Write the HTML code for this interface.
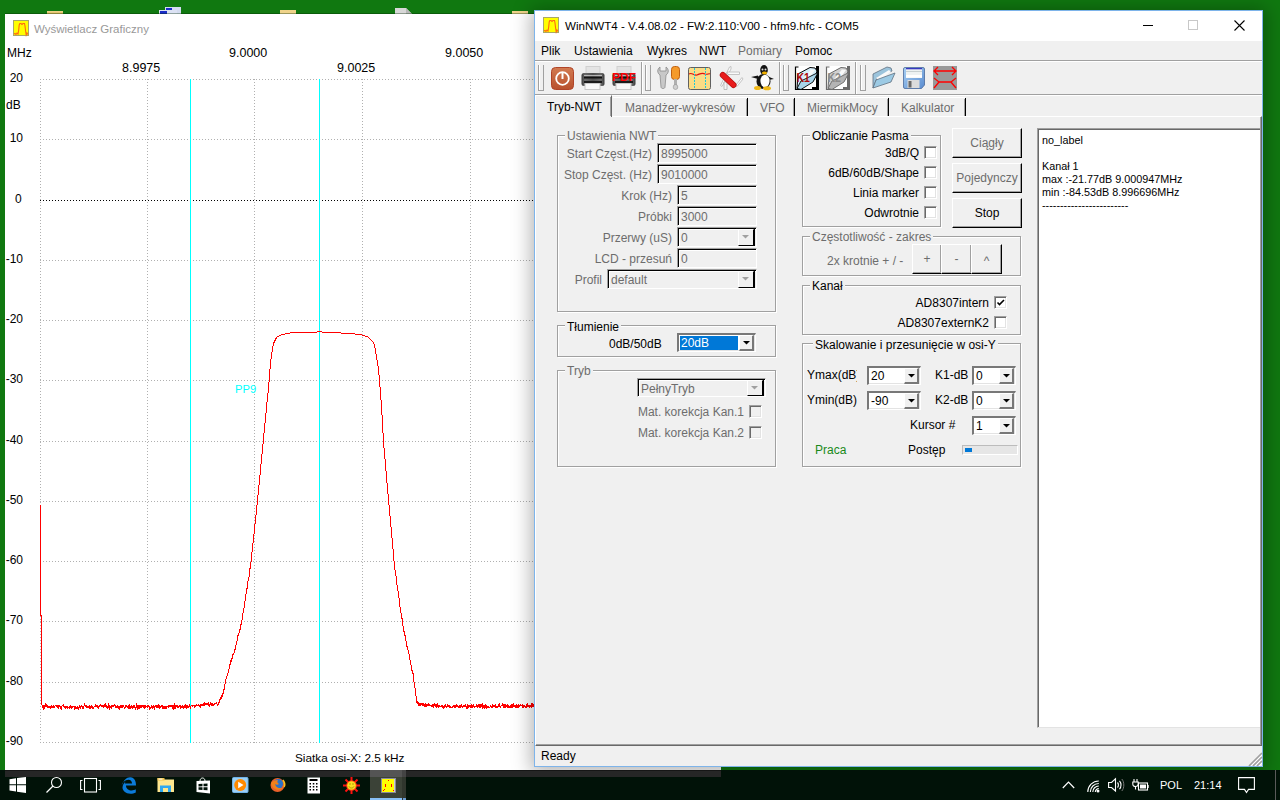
<!DOCTYPE html><html><head><meta charset="utf-8"><style>
*{box-sizing:border-box}
body{margin:0;width:1280px;height:800px;position:relative;overflow:hidden;background:#107810;font-family:"Liberation Sans",sans-serif;font-size:12px;color:#000}
.a{position:absolute}
.t{position:absolute;white-space:nowrap;line-height:14px}
svg{position:absolute;overflow:visible}
</style></head><body>
<div class="a" style="left:47px;top:11px;width:16px;height:3px;background:linear-gradient(#f0d890,#d8b050)"></div>
<div class="a" style="left:165px;top:7px;width:16px;height:7px;background:#d4dcf0;"></div>
<div class="a" style="left:166px;top:8px;width:6px;height:3px;background:#1a2cc8;"></div>
<div class="a" style="left:159px;top:10px;width:18px;height:4px;background:#dce2f4;"></div>
<div class="a" style="left:160px;top:11px;width:7px;height:3px;background:#1a2cc8;"></div>
<div class="a" style="left:280px;top:10px;width:16px;height:4px;background:#efd38a;"></div>
<svg style="left:395px;top:8px" width="20" height="6"><path d="M0,0 L11,0 L17,6 L0,6 Z" fill="#d8d8d8"/><path d="M11,0 L17,6 L11,6 Z" fill="#b8b8b8"/></svg>
<div class="a" style="left:512px;top:11px;width:16px;height:3px;background:#efd38a;"></div>
<div class="a" style="left:5px;top:13px;width:715px;height:1px;background:rgba(0,40,0,.35);"></div>
<div class="a" style="left:5px;top:14px;width:716px;height:763px;background:#fff;"></div>
<svg style="left:13px;top:20px" width="16" height="16"><rect x="0.5" y="0.5" width="15" height="15" fill="#ffff00" stroke="#a8a868"/>
<polyline points="1,14 2,13.5 3,14.5 4,13 5,14 5.7,10 6.2,5 6.8,3.5 8,3.5 9,4.5 10,3.5 11.5,3.5 12,6 12.6,11 13.2,15 14,13 15,14.5" fill="none" stroke="#ff6a10" stroke-width="1.1"/></svg>
<div class="t" style="left:34px;top:22px;font-size:11.5px;color:#999;">Wyświetlacz Graficzny</div>
<div class="t" style="left:7px;top:46px;">MHz</div>
<div class="t" style="left:6px;top:98px;">dB</div>
<div class="t" style="left:0;width:23px;text-align:right;top:71px">20</div>
<div class="t" style="left:0;width:23px;text-align:right;top:131px">10</div>
<div class="t" style="left:15px;top:192px;">0</div>
<div class="t" style="left:0;width:23px;text-align:right;top:252px">-10</div>
<div class="t" style="left:0;width:23px;text-align:right;top:312px">-20</div>
<div class="t" style="left:0;width:23px;text-align:right;top:372px">-30</div>
<div class="t" style="left:0;width:23px;text-align:right;top:433px">-40</div>
<div class="t" style="left:0;width:23px;text-align:right;top:493px">-50</div>
<div class="t" style="left:0;width:23px;text-align:right;top:553px">-60</div>
<div class="t" style="left:0;width:23px;text-align:right;top:613px">-70</div>
<div class="t" style="left:0;width:23px;text-align:right;top:674px">-80</div>
<div class="t" style="left:0;width:23px;text-align:right;top:734px">-90</div>
<div class="t" style="left:122px;top:61px;font-size:12.5px;">8.9975</div>
<div class="t" style="left:229px;top:46px;font-size:12.5px;">9.0000</div>
<div class="t" style="left:337px;top:61px;font-size:12.5px;">9.0025</div>
<div class="t" style="left:445px;top:46px;font-size:12.5px;">9.0050</div>
<div class="t" style="left:295px;top:751px;font-size:11.8px;">Siatka osi-X: 2.5 kHz</div>
<svg style="left:0;top:0" width="720" height="777" shape-rendering="crispEdges"><line x1="40" y1="79.5" x2="720" y2="79.5" stroke="#b0b0b0" stroke-dasharray="1 2"/><line x1="40" y1="139.5" x2="720" y2="139.5" stroke="#b0b0b0" stroke-dasharray="1 2"/><line x1="40" y1="200.5" x2="720" y2="200.5" stroke="#000" stroke-dasharray="1 2"/><line x1="40" y1="260.5" x2="720" y2="260.5" stroke="#b0b0b0" stroke-dasharray="1 2"/><line x1="40" y1="320.5" x2="720" y2="320.5" stroke="#b0b0b0" stroke-dasharray="1 2"/><line x1="40" y1="380.5" x2="720" y2="380.5" stroke="#b0b0b0" stroke-dasharray="1 2"/><line x1="40" y1="441.5" x2="720" y2="441.5" stroke="#b0b0b0" stroke-dasharray="1 2"/><line x1="40" y1="501.5" x2="720" y2="501.5" stroke="#b0b0b0" stroke-dasharray="1 2"/><line x1="40" y1="561.5" x2="720" y2="561.5" stroke="#b0b0b0" stroke-dasharray="1 2"/><line x1="40" y1="621.5" x2="720" y2="621.5" stroke="#b0b0b0" stroke-dasharray="1 2"/><line x1="40" y1="682.5" x2="720" y2="682.5" stroke="#b0b0b0" stroke-dasharray="1 2"/><line x1="40" y1="742.5" x2="720" y2="742.5" stroke="#b0b0b0" stroke-dasharray="1 2"/><line x1="40.5" y1="79" x2="40.5" y2="743" stroke="#b0b0b0" stroke-dasharray="1 2"/><line x1="147.5" y1="79" x2="147.5" y2="743" stroke="#b0b0b0" stroke-dasharray="1 2"/><line x1="254.5" y1="79" x2="254.5" y2="743" stroke="#b0b0b0" stroke-dasharray="1 2"/><line x1="362.5" y1="79" x2="362.5" y2="743" stroke="#b0b0b0" stroke-dasharray="1 2"/><line x1="470.5" y1="79" x2="470.5" y2="743" stroke="#b0b0b0" stroke-dasharray="1 2"/><line x1="577.5" y1="79" x2="577.5" y2="743" stroke="#b0b0b0" stroke-dasharray="1 2"/><line x1="685.5" y1="79" x2="685.5" y2="743" stroke="#b0b0b0" stroke-dasharray="1 2"/><line x1="190.5" y1="79" x2="190.5" y2="743" stroke="#00ffff"/><line x1="319.5" y1="79" x2="319.5" y2="743" stroke="#00ffff"/><polyline fill="none" stroke="#ff0000" stroke-width="1" points="40.5,505 40.5,615 41.5,615 41.5,704 42.5,705.5 42.5,705.5 42.5,706.5 43.5,709.5 43.5,705.5 43.5,705.5 44.5,705.5 44.5,708.5 44.5,706.5 45.5,706.5 45.5,703.5 45.5,703.5 46.5,705.5 46.5,706.5 46.5,705.5 47.5,707.5 47.5,706.5 47.5,705.5 48.5,707.5 48.5,706.5 48.5,706.5 49.5,707.5 49.5,705.5 49.5,706.5 50.5,707.5 50.5,708.5 50.5,706.5 51.5,705.5 51.5,705.5 51.5,707.5 52.5,707.5 52.5,707.5 52.5,706.5 53.5,707.5 53.5,706.5 53.5,705.5 54.5,707.5 54.5,707.5 54.5,706.5 55.5,705.5 55.5,705.5 55.5,705.5 56.5,705.5 56.5,706.5 56.5,705.5 57.5,706.5 57.5,707.5 57.5,705.5 58.5,706.5 58.5,708.5 58.5,705.5 59.5,705.5 59.5,706.5 59.5,705.5 60.5,706.5 60.5,708.5 60.5,706.5 61.5,707.5 61.5,709.5 61.5,706.5 62.5,705.5 62.5,705.5 62.5,705.5 63.5,706.5 63.5,703.5 63.5,706.5 64.5,707.5 64.5,705.5 64.5,707.5 65.5,707.5 65.5,705.5 65.5,708.5 66.5,706.5 66.5,707.5 66.5,706.5 67.5,706.5 67.5,708.5 67.5,707.5 68.5,707.5 68.5,707.5 68.5,707.5 69.5,708.5 69.5,705.5 69.5,706.5 70.5,707.5 70.5,707.5 70.5,705.5 71.5,707.5 71.5,706.5 71.5,708.5 72.5,706.5 72.5,707.5 72.5,707.5 73.5,706.5 73.5,705.5 73.5,706.5 74.5,706.5 74.5,707.5 74.5,709.5 75.5,707.5 75.5,705.5 75.5,707.5 76.5,707.5 76.5,707.5 76.5,708.5 77.5,706.5 77.5,705.5 77.5,708.5 78.5,709.5 78.5,707.5 78.5,707.5 79.5,707.5 79.5,706.5 79.5,705.5 80.5,707.5 80.5,708.5 80.5,707.5 81.5,705.5 81.5,706.5 81.5,706.5 82.5,706.5 82.5,708.5 82.5,706.5 83.5,707.5 83.5,708.5 83.5,706.5 84.5,705.5 84.5,705.5 84.5,703.5 85.5,706.5 85.5,706.5 85.5,706.5 86.5,707.5 86.5,706.5 86.5,705.5 87.5,706.5 87.5,707.5 87.5,706.5 88.5,706.5 88.5,707.5 88.5,706.5 89.5,708.5 89.5,707.5 89.5,705.5 90.5,708.5 90.5,705.5 90.5,706.5 91.5,705.5 91.5,707.5 91.5,707.5 92.5,707.5 92.5,705.5 92.5,708.5 93.5,708.5 93.5,706.5 93.5,707.5 94.5,706.5 94.5,706.5 94.5,706.5 95.5,705.5 95.5,706.5 95.5,704.5 96.5,706.5 96.5,705.5 96.5,705.5 97.5,705.5 97.5,707.5 97.5,707.5 98.5,707.5 98.5,708.5 98.5,706.5 99.5,706.5 99.5,705.5 99.5,705.5 100.5,705.5 100.5,703.5 100.5,705.5 101.5,705.5 101.5,706.5 101.5,706.5 102.5,705.5 102.5,706.5 102.5,705.5 103.5,705.5 103.5,706.5 103.5,707.5 104.5,706.5 104.5,706.5 104.5,704.5 105.5,703.5 105.5,706.5 105.5,706.5 106.5,705.5 106.5,706.5 106.5,707.5 107.5,706.5 107.5,708.5 107.5,707.5 108.5,707.5 108.5,706.5 108.5,703.5 109.5,709.5 109.5,705.5 109.5,705.5 110.5,707.5 110.5,706.5 110.5,706.5 111.5,705.5 111.5,705.5 111.5,708.5 112.5,705.5 112.5,706.5 112.5,705.5 113.5,706.5 113.5,705.5 113.5,705.5 114.5,705.5 114.5,705.5 114.5,704.5 115.5,705.5 115.5,707.5 115.5,707.5 116.5,707.5 116.5,707.5 116.5,706.5 117.5,705.5 117.5,707.5 117.5,706.5 118.5,706.5 118.5,707.5 118.5,707.5 119.5,709.5 119.5,707.5 119.5,707.5 120.5,705.5 120.5,706.5 120.5,707.5 121.5,707.5 121.5,707.5 121.5,705.5 122.5,707.5 122.5,706.5 122.5,705.5 123.5,705.5 123.5,705.5 123.5,705.5 124.5,708.5 124.5,706.5 124.5,707.5 125.5,707.5 125.5,705.5 125.5,705.5 126.5,706.5 126.5,705.5 126.5,705.5 127.5,707.5 127.5,706.5 127.5,706.5 128.5,705.5 128.5,705.5 128.5,708.5 129.5,704.5 129.5,706.5 129.5,708.5 130.5,708.5 130.5,705.5 130.5,707.5 131.5,706.5 131.5,707.5 131.5,705.5 132.5,706.5 132.5,706.5 132.5,708.5 133.5,706.5 133.5,706.5 133.5,705.5 134.5,706.5 134.5,706.5 134.5,705.5 135.5,709.5 135.5,706.5 135.5,708.5 136.5,706.5 136.5,705.5 136.5,703.5 137.5,709.5 137.5,708.5 137.5,705.5 138.5,705.5 138.5,708.5 138.5,707.5 139.5,708.5 139.5,706.5 139.5,705.5 140.5,706.5 140.5,707.5 140.5,705.5 141.5,705.5 141.5,706.5 141.5,707.5 142.5,705.5 142.5,706.5 142.5,706.5 143.5,705.5 143.5,707.5 143.5,705.5 144.5,708.5 144.5,705.5 144.5,705.5 145.5,705.5 145.5,705.5 145.5,707.5 146.5,706.5 146.5,706.5 146.5,706.5 147.5,705.5 147.5,705.5 147.5,707.5 148.5,705.5 148.5,705.5 148.5,706.5 149.5,707.5 149.5,705.5 149.5,709.5 150.5,707.5 150.5,706.5 150.5,708.5 151.5,706.5 151.5,706.5 151.5,705.5 152.5,708.5 152.5,707.5 152.5,707.5 153.5,705.5 153.5,705.5 153.5,706.5 154.5,709.5 154.5,705.5 154.5,707.5 155.5,705.5 155.5,706.5 155.5,706.5 156.5,707.5 156.5,704.5 156.5,705.5 157.5,707.5 157.5,706.5 157.5,705.5 158.5,707.5 158.5,703.5 158.5,707.5 159.5,705.5 159.5,708.5 159.5,705.5 160.5,706.5 160.5,705.5 160.5,707.5 161.5,705.5 161.5,706.5 161.5,705.5 162.5,707.5 162.5,708.5 162.5,705.5 163.5,706.5 163.5,708.5 163.5,706.5 164.5,708.5 164.5,705.5 164.5,706.5 165.5,707.5 165.5,708.5 165.5,706.5 166.5,708.5 166.5,705.5 166.5,706.5 167.5,706.5 167.5,705.5 167.5,706.5 168.5,705.5 168.5,705.5 168.5,707.5 169.5,706.5 169.5,704.5 169.5,706.5 170.5,706.5 170.5,706.5 170.5,705.5 171.5,706.5 171.5,706.5 171.5,705.5 172.5,705.5 172.5,706.5 172.5,708.5 173.5,709.5 173.5,706.5 173.5,705.5 174.5,708.5 174.5,708.5 174.5,703.5 175.5,707.5 175.5,707.5 175.5,708.5 176.5,705.5 176.5,705.5 176.5,706.5 177.5,705.5 177.5,707.5 177.5,707.5 178.5,706.5 178.5,705.5 178.5,707.5 179.5,706.5 179.5,706.5 179.5,705.5 180.5,705.5 180.5,708.5 180.5,705.5 181.5,706.5 181.5,705.5 181.5,707.5 182.5,707.5 182.5,705.5 182.5,705.5 183.5,706.5 183.5,705.5 183.5,708.5 184.5,705.5 184.5,705.5 184.5,707.5 185.5,706.5 185.5,703.5 185.5,707.5 186.5,708.5 186.5,704.5 186.5,705.5 187.5,707.5 187.5,705.5 187.5,705.5 188.5,707.5 188.5,705.5 188.5,707.5 189.5,705.5 189.5,705.5 189.5,705.5 190.5,708.5 190.5,707.5 190.5,706.5 191.5,705.5 191.5,704.5 191.5,705.5 192.5,706.5 192.5,706.5 192.5,705.5 193.5,705.5 193.5,705.5 193.5,705.5 194.5,705.5 194.5,707.5 194.5,705.5 195.5,706.5 195.5,704.5 195.5,705.5 196.5,705.5 196.5,705.5 196.5,704.5 197.5,705.5 197.5,704.5 197.5,705.5 198.5,704.5 198.5,705.5 198.5,704.5 199.5,706.5 199.5,704.5 199.5,706.5 200.5,704.5 200.5,707.5 200.5,706.5 201.5,705.5 201.5,705.5 201.5,704.5 202.5,705.5 202.5,703.5 202.5,704.5 203.5,703.5 203.5,705.5 203.5,703.5 204.5,705.5 204.5,701.5 204.5,704.5 205.5,704.5 205.5,703.5 205.5,703.5 206.5,703.5 206.5,702.5 206.5,704.5 207.5,704.5 207.5,703.5 207.5,704.5 208.5,702.5 208.5,702.5 208.5,704.5 209.5,706.5 209.5,705.5 209.5,704.5 210.5,704.5 210.5,704.5 210.5,702.5 211.5,704.5 211.5,702.5 211.5,705.5 212.5,705.5 212.5,704.5 212.5,703.5 213.5,704.5 213.5,703.5 213.5,705.5 214.5,703.5 214.5,704.5 214.5,704.5 215.5,703.5 215.5,703.5 215.5,703.5 216.5,703.5 216.5,703.5 216.5,702.5 217.5,705.5 217.5,704.5 217.5,705.5 218.5,704.5 218.5,704.5 218.5,703.5 219.5,701.5 219.5,700.5 219.5,701.5 220.5,697.5 220.5,698.5 220.5,699.5 221.5,698.5 221.5,696.5 221.5,697.5 222.5,693.5 222.5,696.5 222.5,695.5 223.5,692.5 223.5,691.5 223.5,691.5 224.5,687.5 224.5,685.5 224.5,685.5 225.5,682.5 225.5,682.5 225.5,682.5 226.5,676.5 226.5,678.5 226.5,678.5 227.5,673.5 227.5,673.5 227.5,675.5 228.5,670.5 228.5,671.5 228.5,671.5 229.5,666.5 229.5,666.5 229.5,665.5 230.5,663.5 230.5,664.5 230.5,662.5 231.5,658.5 231.5,661.5 231.5,660.5 232.5,656.5 232.5,655.5 232.5,655.5 233.5,653.5 233.5,652.5 233.5,654.5 234.5,651.5 234.5,648.5 234.5,651.5 235.5,647.5 235.5,646.5 235.5,646.5 236.5,643.5 236.5,643.5 236.5,643.5 237.5,638.5 237.5,637.5 237.5,637.5 238.5,633.5 238.5,633.5 238.5,633.5 239.5,632.5 239.5,629.5 239.5,631.5 240.5,627.5 240.5,625.5 240.5,626.5 241.5,622.5 241.5,623.5 241.5,623.5 242.5,616.5 242.5,617.5 242.5,617.5 243.5,609.5 243.5,611.5 243.5,612.5 244.5,604.5 244.5,604.5 244.5,604.5 245.5,597.5 245.5,597.5 245.5,599.5 246.5,589.5 246.5,591.5 246.5,590.5 247.5,586.5 247.5,584.5 247.5,585.5 248.5,577.5 248.5,579.5 248.5,580.5 249.5,573.5 249.5,571.5 249.5,570.5 250.5,566.5 250.5,566.5 250.5,566.5 251.5,557.5 252.5,547.5 253.5,538.5 254.5,529.5 255.5,519.5 256.5,510.5 257.5,500.5 258.5,490.5 259.5,480.5 260.5,469.5 261.5,459.5 262.5,449.5 263.5,438.5 264.5,428.5 265.5,418.5 266.5,407.5 267.5,397.5 268.5,389.5 269.5,374.5 270.5,363.5 271.5,355.5 272.5,349.5 273.5,343.5 274.5,341.5 275.5,339.5 276.5,337.5 277.5,336.5 278.5,336.5 279.5,335.5 280.5,335.5 281.5,334.5 282.5,334.5 283.5,334.5 284.5,334.5 285.5,333.5 286.5,333.5 287.5,333.5 288.5,333.5 289.5,333.5 290.5,332.5 291.5,332.5 292.5,332.5 293.5,332.5 294.5,332.5 295.5,332.5 296.5,332.5 297.5,332.5 298.5,332.5 299.5,332.5 300.5,332.5 301.5,332.5 302.5,332.5 303.5,332.5 304.5,332.5 305.5,332.5 306.5,332.5 307.5,332.5 308.5,332.5 309.5,332.5 310.5,332.5 311.5,332.5 312.5,332.5 313.5,332.5 314.5,332.5 315.5,332.5 316.5,332.5 317.5,331.5 318.5,331.5 319.5,331.5 320.5,331.5 321.5,331.5 322.5,332.5 323.5,332.5 324.5,332.5 325.5,332.5 326.5,332.5 327.5,332.5 328.5,332.5 329.5,332.5 330.5,332.5 331.5,332.5 332.5,332.5 333.5,332.5 334.5,332.5 335.5,332.5 336.5,332.5 337.5,332.5 338.5,332.5 339.5,332.5 340.5,332.5 341.5,333.5 342.5,333.5 343.5,333.5 344.5,333.5 345.5,333.5 346.5,333.5 347.5,333.5 348.5,333.5 349.5,333.5 350.5,333.5 351.5,333.5 352.5,333.5 353.5,333.5 354.5,333.5 355.5,334.5 356.5,334.5 357.5,334.5 358.5,334.5 359.5,334.5 360.5,334.5 361.5,334.5 362.5,335.5 363.5,335.5 364.5,335.5 365.5,336.5 366.5,336.5 367.5,336.5 368.5,337.5 369.5,338.5 370.5,339.5 371.5,340.5 372.5,341.5 373.5,342.5 374.5,345.5 375.5,350.5 376.5,356.5 377.5,362.5 378.5,369.5 379.5,380.5 380.5,393.5 381.5,405.5 382.5,423.5 383.5,441.5 384.5,453.5 385.5,464.5 386.5,476.5 387.5,488.5 388.5,499.5 389.5,510.5 390.5,521.5 391.5,532.5 392.5,543.5 393.5,554.5 394.5,567.5 394.5,567.5 394.5,564.5 395.5,574.5 395.5,574.5 395.5,571.5 396.5,579.5 396.5,578.5 396.5,581.5 397.5,588.5 397.5,585.5 397.5,585.5 398.5,595.5 398.5,593.5 398.5,593.5 399.5,601.5 399.5,600.5 399.5,602.5 400.5,610.5 400.5,610.5 400.5,609.5 401.5,615.5 401.5,615.5 401.5,615.5 402.5,621.5 402.5,621.5 402.5,624.5 403.5,627.5 403.5,630.5 403.5,629.5 404.5,633.5 404.5,634.5 404.5,633.5 405.5,637.5 405.5,636.5 405.5,637.5 406.5,643.5 406.5,642.5 406.5,645.5 407.5,648.5 407.5,646.5 407.5,646.5 408.5,653.5 408.5,651.5 408.5,651.5 409.5,656.5 409.5,659.5 409.5,658.5 410.5,661.5 410.5,664.5 410.5,662.5 411.5,667.5 411.5,668.5 411.5,668.5 412.5,672.5 412.5,671.5 412.5,671.5 413.5,675.5 413.5,675.5 413.5,678.5 414.5,685.5 414.5,684.5 414.5,682.5 415.5,693.5 415.5,692.5 415.5,692.5 416.5,699.5 416.5,702.5 416.5,701.5 417.5,701.5 417.5,701.5 417.5,701.5 418.5,705.5 418.5,701.5 418.5,705.5 419.5,704.5 419.5,705.5 419.5,703.5 420.5,703.5 420.5,703.5 420.5,705.5 421.5,704.5 421.5,704.5 421.5,703.5 422.5,703.5 422.5,703.5 422.5,705.5 423.5,705.5 423.5,704.5 423.5,703.5 424.5,706.5 424.5,703.5 424.5,705.5 425.5,706.5 425.5,703.5 425.5,703.5 426.5,706.5 426.5,704.5 426.5,704.5 427.5,704.5 427.5,704.5 427.5,705.5 428.5,703.5 428.5,705.5 428.5,703.5 429.5,705.5 429.5,705.5 429.5,704.5 430.5,705.5 430.5,704.5 430.5,705.5 431.5,705.5 431.5,706.5 431.5,705.5 432.5,706.5 432.5,705.5 432.5,704.5 433.5,704.5 433.5,707.5 433.5,706.5 434.5,704.5 434.5,704.5 434.5,704.5 435.5,706.5 435.5,706.5 435.5,704.5 436.5,705.5 436.5,707.5 436.5,704.5 437.5,706.5 437.5,702.5 437.5,705.5 438.5,706.5 438.5,704.5 438.5,707.5 439.5,706.5 439.5,706.5 439.5,705.5 440.5,706.5 440.5,705.5 440.5,706.5 441.5,705.5 441.5,705.5 441.5,705.5 442.5,707.5 442.5,706.5 442.5,705.5 443.5,707.5 443.5,708.5 443.5,706.5 444.5,705.5 444.5,707.5 444.5,705.5 445.5,704.5 445.5,705.5 445.5,706.5 446.5,707.5 446.5,706.5 446.5,706.5 447.5,706.5 447.5,705.5 447.5,704.5 448.5,706.5 448.5,706.5 448.5,705.5 449.5,707.5 449.5,707.5 449.5,705.5 450.5,707.5 450.5,707.5 450.5,706.5 451.5,707.5 451.5,706.5 451.5,707.5 452.5,707.5 452.5,706.5 452.5,706.5 453.5,705.5 453.5,706.5 453.5,706.5 454.5,707.5 454.5,705.5 454.5,705.5 455.5,706.5 455.5,707.5 455.5,705.5 456.5,704.5 456.5,705.5 456.5,706.5 457.5,706.5 457.5,705.5 457.5,705.5 458.5,706.5 458.5,705.5 458.5,707.5 459.5,705.5 459.5,706.5 459.5,707.5 460.5,707.5 460.5,706.5 460.5,706.5 461.5,704.5 461.5,706.5 461.5,704.5 462.5,707.5 462.5,706.5 462.5,707.5 463.5,705.5 463.5,706.5 463.5,705.5 464.5,706.5 464.5,705.5 464.5,705.5 465.5,706.5 465.5,705.5 465.5,704.5 466.5,708.5 466.5,705.5 466.5,706.5 467.5,707.5 467.5,708.5 467.5,704.5 468.5,706.5 468.5,706.5 468.5,707.5 469.5,705.5 469.5,704.5 469.5,705.5 470.5,705.5 470.5,707.5 470.5,705.5 471.5,704.5 471.5,706.5 471.5,707.5 472.5,707.5 472.5,706.5 472.5,706.5 473.5,704.5 473.5,703.5 473.5,706.5 474.5,707.5 474.5,706.5 474.5,706.5 475.5,706.5 475.5,706.5 475.5,706.5 476.5,705.5 476.5,703.5 476.5,706.5 477.5,707.5 477.5,706.5 477.5,705.5 478.5,705.5 478.5,706.5 478.5,704.5 479.5,704.5 479.5,707.5 479.5,707.5 480.5,704.5 480.5,706.5 480.5,707.5 481.5,705.5 481.5,706.5 481.5,704.5 482.5,703.5 482.5,708.5 482.5,707.5 483.5,707.5 483.5,704.5 483.5,705.5 484.5,705.5 484.5,708.5 484.5,707.5 485.5,704.5 485.5,706.5 485.5,707.5 486.5,707.5 486.5,704.5 486.5,708.5 487.5,706.5 487.5,705.5 487.5,707.5 488.5,706.5 488.5,707.5 488.5,706.5 489.5,707.5 489.5,707.5 489.5,707.5 490.5,706.5 490.5,705.5 490.5,705.5 491.5,706.5 491.5,707.5 491.5,707.5 492.5,704.5 492.5,707.5 492.5,707.5 493.5,705.5 493.5,706.5 493.5,705.5 494.5,705.5 494.5,705.5 494.5,706.5 495.5,705.5 495.5,707.5 495.5,704.5 496.5,707.5 496.5,706.5 496.5,706.5 497.5,706.5 497.5,707.5 497.5,707.5 498.5,704.5 498.5,706.5 498.5,706.5 499.5,703.5 499.5,704.5 499.5,706.5 500.5,706.5 500.5,707.5 500.5,706.5 501.5,705.5 501.5,705.5 501.5,705.5 502.5,705.5 502.5,704.5 502.5,703.5 503.5,704.5 503.5,707.5 503.5,706.5 504.5,706.5 504.5,703.5 504.5,707.5 505.5,706.5 505.5,707.5 505.5,704.5 506.5,706.5 506.5,704.5 506.5,705.5 507.5,705.5 507.5,703.5 507.5,707.5 508.5,707.5 508.5,704.5 508.5,705.5 509.5,707.5 509.5,706.5 509.5,707.5 510.5,705.5 510.5,705.5 510.5,707.5 511.5,704.5 511.5,705.5 511.5,707.5 512.5,704.5 512.5,706.5 512.5,707.5 513.5,703.5 513.5,704.5 513.5,706.5 514.5,705.5 514.5,706.5 514.5,705.5 515.5,705.5 515.5,707.5 515.5,707.5 516.5,707.5 516.5,705.5 516.5,704.5 517.5,705.5 517.5,706.5 517.5,707.5 518.5,704.5 518.5,707.5 518.5,705.5 519.5,705.5 519.5,706.5 519.5,705.5 520.5,705.5 520.5,705.5 520.5,704.5 521.5,705.5 521.5,705.5 521.5,705.5 522.5,704.5 522.5,706.5 522.5,707.5 523.5,707.5 523.5,706.5 523.5,705.5 524.5,705.5 524.5,705.5 524.5,705.5 525.5,707.5 525.5,706.5 525.5,706.5 526.5,705.5 526.5,707.5 526.5,705.5 527.5,703.5 527.5,706.5 527.5,705.5 528.5,706.5 528.5,704.5 528.5,706.5 529.5,705.5 529.5,706.5 529.5,707.5 530.5,705.5 530.5,706.5 530.5,706.5 531.5,703.5 531.5,707.5 531.5,706.5 532.5,703.5 532.5,706.5 532.5,706.5 533.5,704.5 533.5,706.5 533.5,705.5 534.5,707.5 534.5,705.5 534.5,707.5"/></svg>
<div class="t" style="left:235px;top:382px;font-size:11.2px;color:#00ffff;">PP9</div>
<div class="a" style="left:534px;top:10px;width:729px;height:757px;box-shadow:0 2px 18px 3px rgba(0,0,0,.30)"></div>
<div class="a" style="left:534px;top:10px;width:729px;height:757px;background:#f0f0f0;border:1px solid #7eb4ea"></div>
<div class="a" style="left:535px;top:11px;width:727px;height:30px;background:#fff;"></div>
<svg style="left:543px;top:17px" width="16" height="16"><rect x="0.5" y="0.5" width="15" height="15" fill="#ffff00" stroke="#a8a868"/>
<polyline points="1,14 2,13.5 3,14.5 4,13 5,14 5.7,10 6.2,5 6.8,3.5 8,3.5 9,4.5 10,3.5 11.5,3.5 12,6 12.6,11 13.2,15 14,13 15,14.5" fill="none" stroke="#ff6a10" stroke-width="1.1"/></svg>
<div class="t" style="left:565px;top:19px;font-size:11.6px">WinNWT4 - V.4.08.02 - FW:2.110:V00 - hfm9.hfc - COM5</div>
<div class="a" style="left:1143px;top:25px;width:10px;height:1px;background:#000;"></div>
<div class="a" style="left:1188px;top:20px;width:10px;height:10px;background:transparent;border:1px solid #c8c8c8"></div>
<svg style="left:1233px;top:19px" width="13" height="13"><path d="M1.5,1.5 L11.5,11.5 M11.5,1.5 L1.5,11.5" stroke="#000" stroke-width="1.1" fill="none"/></svg>
<div class="a" style="left:535px;top:41px;width:727px;height:19px;background:#f0f0f0;"></div>
<div class="a" style="left:535px;top:60px;width:727px;height:1px;background:#a0a0a0;"></div>
<div class="a" style="left:535px;top:61px;width:727px;height:1px;background:#fff;"></div>
<div class="t" style="left:541px;top:44px;color:#000;">Plik</div>
<div class="t" style="left:574px;top:44px;color:#000;">Ustawienia</div>
<div class="t" style="left:647px;top:44px;color:#000;">Wykres</div>
<div class="t" style="left:699px;top:44px;color:#000;">NWT</div>
<div class="t" style="left:738px;top:44px;color:#6d6d6d;">Pomiary</div>
<div class="t" style="left:795px;top:44px;color:#000;">Pomoc</div>
<div class="a" style="left:535px;top:94px;width:727px;height:1px;background:#a0a0a0;"></div>
<div class="a" style="left:535px;top:95px;width:727px;height:1px;background:#fff;"></div>
<div class="a" style="left:641px;top:62px;width:1px;height:32px;background:#a0a0a0;"></div>
<div class="a" style="left:642px;top:62px;width:1px;height:32px;background:#fff;"></div>
<div class="a" style="left:779px;top:62px;width:1px;height:32px;background:#a0a0a0;"></div>
<div class="a" style="left:780px;top:62px;width:1px;height:32px;background:#fff;"></div>
<div class="a" style="left:855px;top:62px;width:1px;height:32px;background:#a0a0a0;"></div>
<div class="a" style="left:856px;top:62px;width:1px;height:32px;background:#fff;"></div>
<div class="a" style="left:538px;top:65px;width:1px;height:26px;background:#a0a0a0;"></div>
<div class="a" style="left:539px;top:65px;width:1px;height:26px;background:#fff;"></div>
<div class="a" style="left:543px;top:65px;width:1px;height:26px;background:#a0a0a0;"></div>
<div class="a" style="left:538px;top:90px;width:6px;height:1px;background:#a0a0a0;"></div>
<div class="a" style="left:645px;top:65px;width:1px;height:26px;background:#a0a0a0;"></div>
<div class="a" style="left:646px;top:65px;width:1px;height:26px;background:#fff;"></div>
<div class="a" style="left:650px;top:65px;width:1px;height:26px;background:#a0a0a0;"></div>
<div class="a" style="left:645px;top:90px;width:6px;height:1px;background:#a0a0a0;"></div>
<div class="a" style="left:783px;top:65px;width:1px;height:26px;background:#a0a0a0;"></div>
<div class="a" style="left:784px;top:65px;width:1px;height:26px;background:#fff;"></div>
<div class="a" style="left:788px;top:65px;width:1px;height:26px;background:#a0a0a0;"></div>
<div class="a" style="left:783px;top:90px;width:6px;height:1px;background:#a0a0a0;"></div>
<div class="a" style="left:860px;top:65px;width:1px;height:26px;background:#a0a0a0;"></div>
<div class="a" style="left:861px;top:65px;width:1px;height:26px;background:#fff;"></div>
<div class="a" style="left:865px;top:65px;width:1px;height:26px;background:#a0a0a0;"></div>
<div class="a" style="left:860px;top:90px;width:6px;height:1px;background:#a0a0a0;"></div>
<svg style="left:551px;top:67px" width="23" height="23"><defs><linearGradient id="pw" x1="0" y1="0" x2="0" y2="1"><stop offset="0" stop-color="#d27a50"/><stop offset="1" stop-color="#b8502e"/></linearGradient></defs>
<rect x="0.5" y="0.5" width="22" height="22" rx="4" fill="url(#pw)" stroke="#b04428"/>
<circle cx="11.5" cy="11.5" r="6.3" fill="none" stroke="#fff" stroke-width="1.8"/><line x1="11.5" y1="6" x2="11.5" y2="12" stroke="#fff" stroke-width="2"/></svg>
<svg style="left:581px;top:66px" width="25" height="24"><defs><linearGradient id="pb581" x1="0" y1="0" x2="1" y2="0"><stop offset="0" stop-color="#3a3a3a"/><stop offset="0.15" stop-color="#6a6a6a"/><stop offset="0.5" stop-color="#505050"/><stop offset="0.85" stop-color="#6a6a6a"/><stop offset="1" stop-color="#3a3a3a"/></linearGradient></defs>
<rect x="5" y="0.5" width="14" height="8" fill="#e4e4e4" stroke="#d0d0d0"/>
<rect x="0.5" y="7" width="23" height="13" rx="2.5" fill="url(#pb581)"/>
<rect x="3" y="9" width="18" height="1.5" fill="#f0f0f0" opacity=".6"/><rect x="3" y="10.5" width="18" height="2" fill="#111"/><rect x="3" y="15" width="18" height="2" fill="#1a1a1a"/>
<rect x="4" y="17.5" width="15" height="6" fill="#f8f8f8" stroke="#c8c8c8"/></svg>
<svg style="left:612px;top:66px" width="25" height="24"><defs><linearGradient id="pb612" x1="0" y1="0" x2="1" y2="0"><stop offset="0" stop-color="#3a3a3a"/><stop offset="0.15" stop-color="#6a6a6a"/><stop offset="0.5" stop-color="#505050"/><stop offset="0.85" stop-color="#6a6a6a"/><stop offset="1" stop-color="#3a3a3a"/></linearGradient></defs>
<rect x="5" y="0.5" width="14" height="8" fill="#e4e4e4" stroke="#d0d0d0"/>
<rect x="0.5" y="7" width="23" height="13" rx="2.5" fill="url(#pb612)"/>
<rect x="3" y="9" width="18" height="1.5" fill="#f0f0f0" opacity=".6"/><rect x="3" y="10.5" width="18" height="2" fill="#111"/><rect x="3" y="15" width="18" height="2" fill="#1a1a1a"/>
<rect x="4" y="17.5" width="15" height="6" fill="#f8f8f8" stroke="#c8c8c8"/><text x="0" y="15" font-family="Liberation Sans" font-size="11.5" font-weight="bold" fill="#ff0000" textLength="24" lengthAdjust="spacingAndGlyphs">PDF</text></svg>
<svg style="left:657px;top:66px" width="24" height="24">
<path d="M3,1 C0,3 0,7 3,9 L4,21 C4,23 8,23 8,21 L9,9 C12,7 12,3 9,1 L9,5 L3,5 Z" fill="#c8c8c8" stroke="#8a8a8a" stroke-width="0.8"/>
<rect x="14.5" y="0.5" width="8" height="13" rx="3" fill="#f59a2a" stroke="#c06010"/>
<rect x="17" y="13" width="3" height="6" fill="#b0b0b0"/><ellipse cx="18.5" cy="21" rx="2.3" ry="2.5" fill="#d0d0d0" stroke="#909090" stroke-width="0.6"/></svg>
<svg style="left:688px;top:67px" width="23" height="23">
<rect x="0.5" y="0.5" width="22" height="22" rx="2" fill="#fbdc84" stroke="#606060"/>
<path d="M1,7 C4,5 6,9 9,8 C12,7 14,5 17,7 C19,8 21,6 22,7" fill="none" stroke="#e01010" stroke-width="1.2"/>
<line x1="6.5" y1="1" x2="6.5" y2="22" stroke="#20c8d8" stroke-dasharray="2 1"/><line x1="17.5" y1="1" x2="17.5" y2="22" stroke="#20c8d8" stroke-dasharray="2 1"/></svg>
<svg style="left:716px;top:62px" width="30" height="30">
<path d="M4.5,23.5 L13.5,5 L15,4.5 L15,7 L6,24.5 Z" fill="#fafafa" stroke="#b8b8b8" stroke-width="0.8"/>
<path d="M11,10 L23.5,10 L23.5,12.5 L12,12.5 Z" fill="#fafafa" stroke="#b8b8b8" stroke-width="0.8"/>
<path d="M19.5,23.5 L26,15.5 L27,17 L21,24.5 Z" fill="#fafafa" stroke="#b8b8b8" stroke-width="0.8"/>
<path d="M8,20 L8,27.5 L11,27.5 L11,20 Z" fill="#f4f4f4" stroke="#b0b0b0" stroke-width="0.8"/>
<line x1="6.8" y1="13" x2="17.5" y2="23" stroke="#b01010" stroke-width="6" stroke-linecap="round"/>
<line x1="6.8" y1="13" x2="17.5" y2="23" stroke="#e81c1c" stroke-width="4.6" stroke-linecap="round"/></svg>
<svg style="left:750px;top:62px" width="26" height="30">
<path d="M1,15 L8,13.5 L8,17 Z M24,17 L18,14.5 L18,18 Z" fill="#111"/>
<ellipse cx="13.5" cy="19.5" rx="7" ry="7.5" fill="#111"/>
<ellipse cx="14" cy="8" rx="3.8" ry="5" fill="#111"/>
<ellipse cx="15" cy="19" rx="4.6" ry="6.2" fill="#fff"/>
<circle cx="12.5" cy="7.5" r="1" fill="#ddd"/><circle cx="15.5" cy="7.5" r="1" fill="#ddd"/>
<ellipse cx="14.5" cy="11" rx="2.6" ry="1.4" fill="#f0b000"/>
<ellipse cx="7.5" cy="26" rx="3.5" ry="2" fill="#f0b818"/><ellipse cx="17" cy="26.2" rx="4" ry="2" fill="#f0b818"/></svg>
<svg style="left:795px;top:66px" width="25" height="25">
<rect x="0" y="0" width="24" height="24" fill="#fff"/>
<path d="M0.5,24 L0.5,1 L3.5,1" fill="none" stroke="#000" stroke-width="1.2"/>
<path d="M0.5,23.5 L18,23.5" stroke="#000" stroke-width="1"/>
<path d="M21,0 L24,0 L24,24 L17,24 L17,21 L21,21 Z" fill="#000"/>
<path d="M2,22.5 L3,8 L15,1.5 L20,2 L22,5 L19,14 L6,23 Z" fill="#d4ecf8" stroke="#000" stroke-width="1"/>
<path d="M5,17 L16,3.5 L20,4 L10,18 Z" fill="#f8f8f8"/>
<path d="M2,22.5 L6,15 L23,6.5 L18,16 L6,23.5 Z" fill="#a8d4ea" stroke="#000" stroke-width="0.9"/>
<text x="1.5" y="16" font-family="Liberation Sans" font-size="12.5" font-weight="bold" fill="#b00c0c" textLength="13.5" lengthAdjust="spacingAndGlyphs">K1</text></svg>
<svg style="left:826px;top:66px" width="25" height="25">
<rect x="0" y="0" width="24" height="24" fill="#fff"/>
<path d="M0.5,24 L0.5,1 L3.5,1" fill="none" stroke="#6a6a6a" stroke-width="1.2"/>
<path d="M0.5,23.5 L18,23.5" stroke="#6a6a6a" stroke-width="1"/>
<path d="M21,0 L24,0 L24,24 L17,24 L17,21 L21,21 Z" fill="#6a6a6a"/>
<path d="M2,22.5 L3,8 L15,1.5 L20,2 L22,5 L19,14 L6,23 Z" fill="#d0d0d0" stroke="#6a6a6a" stroke-width="1"/>
<path d="M5,17 L16,3.5 L20,4 L10,18 Z" fill="#f8f8f8"/>
<path d="M2,22.5 L6,15 L23,6.5 L18,16 L6,23.5 Z" fill="#b4b4b4" stroke="#6a6a6a" stroke-width="0.9"/>
<text x="1.5" y="16" font-family="Liberation Sans" font-size="12.5" font-weight="bold" fill="#8c8c8c" textLength="13.5" lengthAdjust="spacingAndGlyphs">K2</text></svg>
<svg style="left:872px;top:66px" width="24" height="24">
<path d="M1,22 L1,8 L15,1 L19,2 L20,5 L5,12 Z" fill="#9cc4dc" stroke="#607080" stroke-width="0.8"/>
<path d="M4,12 L17,4 L19,6 L6,14 Z" fill="#fafafa"/>
<path d="M1,22 L4,14 L23,7 L19,16 Z" fill="#9ccae4" stroke="#607080" stroke-width="0.8"/></svg>
<svg style="left:903px;top:67px" width="22" height="22"><defs><linearGradient id="fl" x1="0" y1="0" x2="1" y2="1"><stop offset="0" stop-color="#a8d0f4"/><stop offset="1" stop-color="#5a8cd0"/></linearGradient></defs>
<path d="M0.5,2 Q0.5,0.5 2,0.5 L20,0.5 Q21.5,0.5 21.5,2 L21.5,18 L18.5,21.5 L2,21.5 Q0.5,21.5 0.5,20 Z" fill="url(#fl)" stroke="#4a6a9a" stroke-width="0.8"/>
<rect x="3" y="1" width="16" height="10" fill="#eef2f2"/><rect x="3" y="1" width="16" height="1.3" fill="#3838c0"/><rect x="3" y="4" width="16" height="1" fill="#c8d0d0"/><rect x="3" y="8" width="16" height="2.5" fill="#fff"/>
<rect x="4.5" y="13" width="12" height="8" fill="#dcdcdc"/><rect x="5.5" y="14" width="3" height="6.5" fill="#6a6a6a"/></svg>
<svg style="left:933px;top:66px" width="24" height="24"><rect width="24" height="24" fill="#999"/>
<path d="M1,5 L23,5 M5,1 L1,5 L5,9 M19,1 L23,5 L19,9 M1,12 L6,16 L1,22 M23,12 L18,16 L23,22 M6,16 L18,16" stroke="#ff0000" stroke-width="1.3" fill="none"/></svg>
<div class="a" style="left:535px;top:116px;width:727px;height:630px;background:#f0f0f0;border-top:1px solid #fff;border-left:1px solid #fff;border-right:1px solid #696969;border-bottom:1px solid #696969;box-shadow:inset -1px -1px 0 #a0a0a0"></div>
<div class="a" style="left:747px;top:98px;width:1px;height:18px;background:#000;"></div>
<div class="a" style="left:746px;top:99px;width:1px;height:17px;background:#a0a0a0;"></div>
<div class="a" style="left:613px;top:97px;width:134px;height:1px;background:#fff;"></div>
<div class="t" style="left:625px;top:101px;color:#6d6d6d;">Manadżer-wykresów</div>
<div class="a" style="left:794px;top:98px;width:1px;height:18px;background:#000;"></div>
<div class="a" style="left:793px;top:99px;width:1px;height:17px;background:#a0a0a0;"></div>
<div class="a" style="left:748px;top:97px;width:46px;height:1px;background:#fff;"></div>
<div class="t" style="left:760px;top:101px;color:#6d6d6d;">VFO</div>
<div class="a" style="left:888px;top:98px;width:1px;height:18px;background:#000;"></div>
<div class="a" style="left:887px;top:99px;width:1px;height:17px;background:#a0a0a0;"></div>
<div class="a" style="left:795px;top:97px;width:93px;height:1px;background:#fff;"></div>
<div class="t" style="left:807px;top:101px;color:#6d6d6d;">MiermikMocy</div>
<div class="a" style="left:965px;top:98px;width:1px;height:18px;background:#000;"></div>
<div class="a" style="left:964px;top:99px;width:1px;height:17px;background:#a0a0a0;"></div>
<div class="a" style="left:889px;top:97px;width:76px;height:1px;background:#fff;"></div>
<div class="t" style="left:901px;top:101px;color:#6d6d6d;">Kalkulator</div>
<div class="a" style="left:535px;top:95px;width:77px;height:22px;background:#f0f0f0;border-top:1px solid #fff;border-left:1px solid #fff;border-right:1px solid #696969"></div>
<div class="a" style="left:610px;top:97px;width:1px;height:19px;background:#a0a0a0;"></div>
<div class="t" style="left:547px;top:100px;">Tryb-NWT</div>
<div class="a" style="left:557px;top:135px;width:219px;height:177px;border:1px solid #a0a0a0;box-shadow:inset 1px 1px 0 #fff,1px 1px 0 #fff"></div>
<div class="t" style="left:565px;top:129px;padding:0 2px;background:#f0f0f0;color:#6d6d6d">Ustawienia NWT</div>
<div class="t" style="left:452px;width:200px;text-align:right;top:147px;color:#6d6d6d">Start Częst.(Hz)</div>
<div class="a" style="left:657px;top:143px;width:100px;height:20px;border-top:1px solid #a0a0a0;border-left:1px solid #a0a0a0;border-right:1px solid #fff;border-bottom:1px solid #fff;box-shadow:inset 1px 1px 0 #000,inset 2px 2px 0 #fff;background:#f0f0f0"></div>
<div class="t" style="left:661px;top:147px;color:#6d6d6d;">8995000</div>
<div class="t" style="left:452px;width:200px;text-align:right;top:168px;color:#6d6d6d">Stop Częst. (Hz)</div>
<div class="a" style="left:657px;top:164px;width:100px;height:20px;border-top:1px solid #a0a0a0;border-left:1px solid #a0a0a0;border-right:1px solid #fff;border-bottom:1px solid #fff;box-shadow:inset 1px 1px 0 #000,inset 2px 2px 0 #fff;background:#f0f0f0"></div>
<div class="t" style="left:661px;top:168px;color:#6d6d6d;">9010000</div>
<div class="t" style="left:472px;width:200px;text-align:right;top:189px;color:#6d6d6d">Krok (Hz)</div>
<div class="a" style="left:677px;top:185px;width:80px;height:20px;border-top:1px solid #a0a0a0;border-left:1px solid #a0a0a0;border-right:1px solid #fff;border-bottom:1px solid #fff;box-shadow:inset 1px 1px 0 #000,inset 2px 2px 0 #fff;background:#f0f0f0"></div>
<div class="t" style="left:681px;top:189px;color:#6d6d6d;">5</div>
<div class="t" style="left:472px;width:200px;text-align:right;top:210px;color:#6d6d6d">Próbki</div>
<div class="a" style="left:677px;top:206px;width:80px;height:20px;border-top:1px solid #a0a0a0;border-left:1px solid #a0a0a0;border-right:1px solid #fff;border-bottom:1px solid #fff;box-shadow:inset 1px 1px 0 #000,inset 2px 2px 0 #fff;background:#f0f0f0"></div>
<div class="t" style="left:681px;top:210px;color:#6d6d6d;">3000</div>
<div class="t" style="left:472px;width:200px;text-align:right;top:231px;color:#6d6d6d">Przerwy (uS)</div>
<div class="a" style="left:677px;top:227px;width:80px;height:20px;border-top:1px solid #a0a0a0;border-left:1px solid #a0a0a0;border-right:1px solid #fff;border-bottom:1px solid #fff;box-shadow:inset 1px 1px 0 #000,inset 2px 2px 0 #fff;background:#f0f0f0"></div>
<div class="t" style="left:681px;top:231px;color:#6d6d6d;">0</div>
<div class="a" style="left:754px;top:228px;width:1px;height:18px;background:#000;"></div>
<div class="a" style="left:738px;top:229px;width:16px;height:17px;background:#f0f0f0;border-top:1px solid #fff;border-left:1px solid #fff;border-bottom:1px solid #000;border-right:1px solid #000"></div>
<svg style="left:742px;top:235px" width="8" height="4"><polygon points="0,0 7,0 3.5,3.5" fill="#a0a0a0"/></svg>
<div class="t" style="left:472px;width:200px;text-align:right;top:252px;color:#6d6d6d">LCD - przesuń</div>
<div class="a" style="left:677px;top:248px;width:80px;height:20px;border-top:1px solid #a0a0a0;border-left:1px solid #a0a0a0;border-right:1px solid #fff;border-bottom:1px solid #fff;box-shadow:inset 1px 1px 0 #000,inset 2px 2px 0 #fff;background:#f0f0f0"></div>
<div class="t" style="left:681px;top:252px;color:#6d6d6d;">0</div>
<div class="t" style="left:402px;width:200px;text-align:right;top:273px;color:#6d6d6d">Profil</div>
<div class="a" style="left:607px;top:269px;width:150px;height:20px;border-top:1px solid #a0a0a0;border-left:1px solid #a0a0a0;border-right:1px solid #fff;border-bottom:1px solid #fff;box-shadow:inset 1px 1px 0 #000,inset 2px 2px 0 #fff;background:#f0f0f0"></div>
<div class="t" style="left:611px;top:273px;color:#6d6d6d;">default</div>
<div class="a" style="left:754px;top:270px;width:1px;height:18px;background:#000;"></div>
<div class="a" style="left:738px;top:271px;width:16px;height:17px;background:#f0f0f0;border-top:1px solid #fff;border-left:1px solid #fff;border-bottom:1px solid #000;border-right:1px solid #000"></div>
<svg style="left:742px;top:277px" width="8" height="4"><polygon points="0,0 7,0 3.5,3.5" fill="#a0a0a0"/></svg>
<div class="a" style="left:557px;top:325px;width:219px;height:32px;border:1px solid #a0a0a0;box-shadow:inset 1px 1px 0 #fff,1px 1px 0 #fff"></div>
<div class="t" style="left:565px;top:320px;padding:0 2px;background:#f0f0f0;color:#000">Tłumienie</div>
<div class="t" style="left:609px;top:337px;">0dB/50dB</div>
<div class="a" style="left:677px;top:333px;width:79px;height:19px;border-top:2px solid #787878;border-left:2px solid #787878;border-right:1px solid #fff;border-bottom:1px solid #fff;box-shadow:inset -1px -1px 0 #e3e3e3;background:#fff"></div>
<div class="a" style="left:739px;top:335px;width:15px;height:16px;background:#f0f0f0;border-top:1px solid #fff;border-left:1px solid #fff;border-bottom:2px solid #787878;border-right:2px solid #787878"></div>
<svg style="left:743px;top:341px" width="8" height="4"><polygon points="0,0 7,0 3.5,3.5" fill="#000"/></svg>
<div class="a" style="left:680px;top:336px;width:58px;height:14px;background:#0078d7;"></div>
<div class="t" style="left:681px;top:336px;color:#fff;">20dB</div>
<div class="a" style="left:557px;top:370px;width:219px;height:97px;border:1px solid #a0a0a0;box-shadow:inset 1px 1px 0 #fff,1px 1px 0 #fff"></div>
<div class="t" style="left:565px;top:364px;padding:0 2px;background:#f0f0f0;color:#6d6d6d">Tryb</div>
<div class="a" style="left:637px;top:378px;width:129px;height:19px;border-top:1px solid #a0a0a0;border-left:1px solid #a0a0a0;border-right:1px solid #fff;border-bottom:1px solid #fff;box-shadow:inset 1px 1px 0 #000,inset 2px 2px 0 #fff;background:#f0f0f0"></div>
<div class="t" style="left:641px;top:382px;color:#6d6d6d;">PełnyTryb</div>
<div class="a" style="left:763px;top:379px;width:1px;height:17px;background:#000;"></div>
<div class="a" style="left:747px;top:380px;width:16px;height:16px;background:#f0f0f0;border-top:1px solid #fff;border-left:1px solid #fff;border-bottom:1px solid #000;border-right:1px solid #000"></div>
<svg style="left:751px;top:386px" width="8" height="4"><polygon points="0,0 7,0 3.5,3.5" fill="#a0a0a0"/></svg>
<div class="t" style="left:544px;width:200px;text-align:right;top:405px;color:#6d6d6d">Mat. korekcja Kan.1</div>
<div class="a" style="left:749px;top:405px;width:13px;height:13px;border-top:1px solid #a0a0a0;border-left:1px solid #a0a0a0;border-right:1px solid #fff;border-bottom:1px solid #fff;box-shadow:inset 1px 1px 0 #696969,inset -1px -1px 0 #e3e3e3;background:#f0f0f0"></div>
<div class="t" style="left:544px;width:200px;text-align:right;top:426px;color:#6d6d6d">Mat. korekcja Kan.2</div>
<div class="a" style="left:749px;top:426px;width:13px;height:13px;border-top:1px solid #a0a0a0;border-left:1px solid #a0a0a0;border-right:1px solid #fff;border-bottom:1px solid #fff;box-shadow:inset 1px 1px 0 #696969,inset -1px -1px 0 #e3e3e3;background:#f0f0f0"></div>
<div class="a" style="left:802px;top:135px;width:139px;height:92px;border:1px solid #a0a0a0;box-shadow:inset 1px 1px 0 #fff,1px 1px 0 #fff"></div>
<div class="t" style="left:810px;top:129px;padding:0 2px;background:#f0f0f0;color:#000">Obliczanie Pasma</div>
<div class="t" style="left:719px;width:200px;text-align:right;top:146px;color:#000">3dB/Q</div>
<div class="a" style="left:924px;top:146px;width:13px;height:13px;border-top:1px solid #a0a0a0;border-left:1px solid #a0a0a0;border-right:1px solid #fff;border-bottom:1px solid #fff;box-shadow:inset 1px 1px 0 #696969,inset -1px -1px 0 #e3e3e3;background:#fff"></div>
<div class="t" style="left:719px;width:200px;text-align:right;top:166px;color:#000">6dB/60dB/Shape</div>
<div class="a" style="left:924px;top:166px;width:13px;height:13px;border-top:1px solid #a0a0a0;border-left:1px solid #a0a0a0;border-right:1px solid #fff;border-bottom:1px solid #fff;box-shadow:inset 1px 1px 0 #696969,inset -1px -1px 0 #e3e3e3;background:#fff"></div>
<div class="t" style="left:719px;width:200px;text-align:right;top:186px;color:#000">Linia marker</div>
<div class="a" style="left:924px;top:186px;width:13px;height:13px;border-top:1px solid #a0a0a0;border-left:1px solid #a0a0a0;border-right:1px solid #fff;border-bottom:1px solid #fff;box-shadow:inset 1px 1px 0 #696969,inset -1px -1px 0 #e3e3e3;background:#fff"></div>
<div class="t" style="left:719px;width:200px;text-align:right;top:206px;color:#000">Odwrotnie</div>
<div class="a" style="left:924px;top:206px;width:13px;height:13px;border-top:1px solid #a0a0a0;border-left:1px solid #a0a0a0;border-right:1px solid #fff;border-bottom:1px solid #fff;box-shadow:inset 1px 1px 0 #696969,inset -1px -1px 0 #e3e3e3;background:#fff"></div>
<div class="a" style="left:952px;top:128px;width:70px;height:30px;background:#f0f0f0;border-top:1px solid #fff;border-left:1px solid #fff;border-right:1px solid #000;border-bottom:1px solid #000;box-shadow:inset -1px -1px 0 #a0a0a0"></div>
<div class="t" style="left:952px;width:70px;text-align:center;top:136px;color:#6d6d6d">Ciągły</div>
<div class="a" style="left:952px;top:163px;width:70px;height:30px;background:#f0f0f0;border-top:1px solid #fff;border-left:1px solid #fff;border-right:1px solid #000;border-bottom:1px solid #000;box-shadow:inset -1px -1px 0 #a0a0a0"></div>
<div class="t" style="left:952px;width:70px;text-align:center;top:171px;color:#6d6d6d">Pojedynczy</div>
<div class="a" style="left:952px;top:198px;width:70px;height:30px;background:#f0f0f0;border-top:1px solid #fff;border-left:1px solid #fff;border-right:1px solid #000;border-bottom:1px solid #000;box-shadow:inset -1px -1px 0 #a0a0a0"></div>
<div class="t" style="left:952px;width:70px;text-align:center;top:206px;color:#000">Stop</div>
<div class="a" style="left:802px;top:236px;width:219px;height:40px;border:1px solid #a0a0a0;box-shadow:inset 1px 1px 0 #fff,1px 1px 0 #fff"></div>
<div class="t" style="left:810px;top:230px;padding:0 2px;background:#f0f0f0;color:#6d6d6d">Częstotliwość - zakres</div>
<div class="t" style="left:827px;top:254px;color:#6d6d6d;">2x krotnie + / -</div>
<div class="a" style="left:912px;top:244px;width:30px;height:30px;background:#f0f0f0;border-top:1px solid #fff;border-left:1px solid #fff;border-right:1px solid #000;border-bottom:1px solid #000;box-shadow:inset -1px -1px 0 #a0a0a0"></div>
<div class="t" style="left:912px;width:30px;text-align:center;top:252px;color:#6d6d6d">+</div>
<div class="a" style="left:941px;top:244px;width:31px;height:30px;background:#f0f0f0;border-top:1px solid #fff;border-left:1px solid #fff;border-right:1px solid #000;border-bottom:1px solid #000;box-shadow:inset -1px -1px 0 #a0a0a0"></div>
<div class="t" style="left:941px;width:31px;text-align:center;top:252px;color:#6d6d6d">-</div>
<div class="a" style="left:971px;top:244px;width:31px;height:30px;background:#f0f0f0;border-top:1px solid #fff;border-left:1px solid #fff;border-right:1px solid #000;border-bottom:1px solid #000;box-shadow:inset -1px -1px 0 #a0a0a0"></div>
<div class="t" style="left:971px;width:31px;text-align:center;top:254px;color:#6d6d6d">^</div>
<div class="a" style="left:802px;top:285px;width:219px;height:50px;border:1px solid #a0a0a0;box-shadow:inset 1px 1px 0 #fff,1px 1px 0 #fff"></div>
<div class="t" style="left:810px;top:279px;padding:0 2px;background:#f0f0f0;color:#000">Kanał</div>
<div class="t" style="left:789px;width:200px;text-align:right;top:296px;color:#000">AD8307intern</div>
<div class="a" style="left:994px;top:296px;width:13px;height:13px;border-top:1px solid #a0a0a0;border-left:1px solid #a0a0a0;border-right:1px solid #fff;border-bottom:1px solid #fff;box-shadow:inset 1px 1px 0 #696969,inset -1px -1px 0 #e3e3e3;background:#fff"></div>
<svg style="left:997px;top:299px" width="8" height="8"><polyline points="0.5,3.5 2.5,5.5 7,1" fill="none" stroke="#000" stroke-width="1.6"/></svg>
<div class="t" style="left:789px;width:200px;text-align:right;top:316px;color:#000">AD8307externK2</div>
<div class="a" style="left:994px;top:316px;width:13px;height:13px;border-top:1px solid #a0a0a0;border-left:1px solid #a0a0a0;border-right:1px solid #fff;border-bottom:1px solid #fff;box-shadow:inset 1px 1px 0 #696969,inset -1px -1px 0 #e3e3e3;background:#fff"></div>
<div class="a" style="left:802px;top:343px;width:219px;height:124px;border:1px solid #a0a0a0;box-shadow:inset 1px 1px 0 #fff,1px 1px 0 #fff"></div>
<div class="t" style="left:813px;top:338px;padding:0 2px;background:#f0f0f0;color:#000">Skalowanie i przesunięcie w osi-Y</div>
<div class="t" style="left:807px;top:368px;width:50px;overflow:hidden">Ymax(dB)</div>
<div class="t" style="left:807px;top:393px;">Ymin(dB)</div>
<div class="a" style="left:867px;top:366px;width:54px;height:19px;border-top:2px solid #787878;border-left:2px solid #787878;border-right:1px solid #fff;border-bottom:1px solid #fff;box-shadow:inset -1px -1px 0 #e3e3e3;background:#fff"></div>
<div class="a" style="left:904px;top:368px;width:15px;height:16px;background:#f0f0f0;border-top:1px solid #fff;border-left:1px solid #fff;border-bottom:2px solid #787878;border-right:2px solid #787878"></div>
<svg style="left:908px;top:374px" width="8" height="4"><polygon points="0,0 7,0 3.5,3.5" fill="#000"/></svg>
<div class="t" style="left:871px;top:369px;color:#000;">20</div>
<div class="a" style="left:867px;top:391px;width:54px;height:19px;border-top:2px solid #787878;border-left:2px solid #787878;border-right:1px solid #fff;border-bottom:1px solid #fff;box-shadow:inset -1px -1px 0 #e3e3e3;background:#fff"></div>
<div class="a" style="left:904px;top:393px;width:15px;height:16px;background:#f0f0f0;border-top:1px solid #fff;border-left:1px solid #fff;border-bottom:2px solid #787878;border-right:2px solid #787878"></div>
<svg style="left:908px;top:399px" width="8" height="4"><polygon points="0,0 7,0 3.5,3.5" fill="#000"/></svg>
<div class="t" style="left:871px;top:394px;color:#000;">-90</div>
<div class="t" style="left:935px;top:368px;">K1-dB</div>
<div class="t" style="left:935px;top:393px;">K2-dB</div>
<div class="a" style="left:972px;top:366px;width:44px;height:19px;border-top:2px solid #787878;border-left:2px solid #787878;border-right:1px solid #fff;border-bottom:1px solid #fff;box-shadow:inset -1px -1px 0 #e3e3e3;background:#fff"></div>
<div class="a" style="left:999px;top:368px;width:15px;height:16px;background:#f0f0f0;border-top:1px solid #fff;border-left:1px solid #fff;border-bottom:2px solid #787878;border-right:2px solid #787878"></div>
<svg style="left:1003px;top:374px" width="8" height="4"><polygon points="0,0 7,0 3.5,3.5" fill="#000"/></svg>
<div class="t" style="left:976px;top:369px;color:#000;">0</div>
<div class="a" style="left:972px;top:391px;width:44px;height:19px;border-top:2px solid #787878;border-left:2px solid #787878;border-right:1px solid #fff;border-bottom:1px solid #fff;box-shadow:inset -1px -1px 0 #e3e3e3;background:#fff"></div>
<div class="a" style="left:999px;top:393px;width:15px;height:16px;background:#f0f0f0;border-top:1px solid #fff;border-left:1px solid #fff;border-bottom:2px solid #787878;border-right:2px solid #787878"></div>
<svg style="left:1003px;top:399px" width="8" height="4"><polygon points="0,0 7,0 3.5,3.5" fill="#000"/></svg>
<div class="t" style="left:976px;top:394px;color:#000;">0</div>
<div class="a" style="left:972px;top:416px;width:44px;height:19px;border-top:2px solid #787878;border-left:2px solid #787878;border-right:1px solid #fff;border-bottom:1px solid #fff;box-shadow:inset -1px -1px 0 #e3e3e3;background:#fff"></div>
<div class="a" style="left:999px;top:418px;width:15px;height:16px;background:#f0f0f0;border-top:1px solid #fff;border-left:1px solid #fff;border-bottom:2px solid #787878;border-right:2px solid #787878"></div>
<svg style="left:1003px;top:424px" width="8" height="4"><polygon points="0,0 7,0 3.5,3.5" fill="#000"/></svg>
<div class="t" style="left:976px;top:419px;color:#000;">1</div>
<div class="t" style="left:910px;top:418px;">Kursor #</div>
<div class="t" style="left:815px;top:443px;color:#1a8a1a;">Praca</div>
<div class="t" style="left:908px;top:443px;">Postęp</div>
<div class="a" style="left:962px;top:445px;width:56px;height:10px;background:#e6e6e6;border-top:1px solid #bcbcbc;border-left:1px solid #bcbcbc;border-right:1px solid #fff;border-bottom:1px solid #fff"></div>
<div class="a" style="left:965px;top:448px;width:7px;height:4px;background:#0078d7;"></div>
<div class="a" style="left:1037px;top:128px;width:223px;height:600px;background:#fff;border-top:1px solid #a0a0a0;border-left:1px solid #a0a0a0;border-bottom:1px solid #e3e3e3;box-shadow:inset 1px 1px 0 #696969"></div>
<div class="t" style="left:1042px;top:134px;font-size:10.8px;line-height:13px">no_label</div>
<div class="t" style="left:1042px;top:160px;font-size:10.8px;line-height:13px">Kanał 1</div>
<div class="t" style="left:1042px;top:173px;font-size:10.8px;line-height:13px">max :-21.77dB 9.000947MHz</div>
<div class="t" style="left:1042px;top:186px;font-size:10.8px;line-height:13px">min :-84.53dB 8.996696MHz</div>
<div class="t" style="left:1042px;top:199px;font-size:10.8px;line-height:13px">------------------------</div>
<div class="t" style="left:541px;top:749px;">Ready</div>
<svg style="left:1249px;top:753px" width="13" height="13"><path d="M13,0 L0,13 M13,4 L4,13 M13,8 L8,13" stroke="#a0a0a0" stroke-width="1.6" fill="none"/><path d="M13,2 L2,13 M13,6 L6,13 M13,10 L10,13" stroke="#fff" stroke-width="1" fill="none"/></svg>
<div class="a" style="left:0px;top:770px;width:1280px;height:30px;background:#011208;"></div>
<div class="a" style="left:5px;top:770px;width:716px;height:7px;background:#262626;"></div>
<div class="a" style="left:5px;top:770px;width:716px;height:1px;background:#161616;"></div>
<svg style="left:9px;top:777px" width="18" height="17"><path d="M0.5,2.2 L7,1.3 L7,7.3 L0.5,7.3 Z M8,1.1 L17,0 L17,7.3 L8,7.3 Z M0.5,8.3 L7,8.3 L7,14.5 L0.5,13.6 Z M8,8.3 L17,8.3 L17,16 L8,14.7 Z" fill="#fff"/></svg>
<svg style="left:45px;top:776px" width="18" height="18"><circle cx="11.5" cy="6.5" r="5" fill="none" stroke="#fff" stroke-width="1.1"/><line x1="8" y1="10" x2="1.5" y2="16.5" stroke="#fff" stroke-width="1.2"/></svg>
<svg style="left:80px;top:778px" width="21" height="15"><rect x="4.5" y="0.5" width="12" height="13.5" fill="none" stroke="#fff" stroke-width="1.1"/><path d="M2.5,2.5 L0.6,2.5 L0.6,11.5 L2.5,11.5 M18.5,2.5 L20.4,2.5 L20.4,11.5 L18.5,11.5" fill="none" stroke="#fff" stroke-width="1.1"/></svg>
<svg style="left:120px;top:777px" width="17" height="17"><path d="M2.5,8.5 C3,3 7,0 10.5,0.3 C14.5,0.8 16,4 16,8.5 L6,8.5 C6,12 9,13.5 11.5,13.5 C13.2,13.5 14.8,12.9 15.8,12.3 L15.8,15.4 C14.2,16.3 12.5,16.7 10.5,16.7 C5.5,16.7 2.5,13.5 2.5,10.5 C2.5,8 4,5.8 6,4.3 C5,5.5 4.8,6.3 4.8,6.5 L12,6.5 C12,4.2 10.5,2.8 8.5,2.8 C5,2.8 2,6 0.5,9.5 C0.7,9 1.5,7 2.5,6 Z" fill="#0c7bd9"/></svg>
<svg style="left:157px;top:777px" width="18" height="16"><path d="M0.5,1 L6,1 L7.5,2.5 L17,2.5 L17,15 L0.5,15 Z" fill="#fde68e"/><rect x="0.5" y="1" width="7" height="2.5" fill="#f3c14a"/><rect x="1.5" y="1.6" width="4" height="1" fill="#fff"/><path d="M3,15 L3,8.5 L14,8.5 L14,15 L11,15 L11,11 L6,11 L6,15 Z" fill="#2ea8f0"/></svg>
<svg style="left:196px;top:777px" width="15" height="17"><path d="M4,4 C4,0 9,0 9,4" fill="none" stroke="#fff" stroke-width="1"/><path d="M0.5,4 L14,3.5 L14,16.5 L0.5,15 Z" fill="#fff"/><path d="M2.5,7 L6.5,6.8 L6.5,9.3 L2.5,9.4 Z M7.5,6.7 L11.5,6.5 L11.5,9.2 L7.5,9.3 Z M2.5,10.3 L6.5,10.3 L6.5,13 L2.5,12.8 Z M7.5,10.3 L11.5,10.3 L11.5,13.3 L7.5,13.1 Z" fill="#011208"/></svg>
<svg style="left:232px;top:777px" width="17" height="16"><rect x="0.5" y="0.5" width="15.5" height="15" rx="1" fill="#9ccff5" stroke="#6fb3ea"/><circle cx="8.2" cy="8" r="6" fill="#ff8a00"/><path d="M6.2,4.7 L11.5,8 L6.2,11.3 Z" fill="#fff"/></svg>
<svg style="left:270px;top:777px" width="15" height="16"><circle cx="7.5" cy="8" r="7" fill="#e8602a"/><circle cx="8.3" cy="6.8" r="4.8" fill="#2a72c8"/><path d="M1,6 C2,13 10,15 14,10 C12,12 6,12 5,7 C6,8 8,8 9,7 C7,6 7,4 8,3 C5,3 3,4 1,6 Z" fill="#f0801a"/><path d="M13,3 C15,6 14.8,9 14,10" stroke="#f4c020" stroke-width="1.5" fill="none"/></svg>
<svg style="left:307px;top:777px" width="14" height="17"><rect x="0.5" y="0.5" width="12.5" height="16" fill="#fff"/><rect x="2.5" y="2" width="8" height="2" fill="#000"/>
<g fill="#000"><rect x="2.5" y="6" width="1.5" height="1.5"/><rect x="5.8" y="6" width="1.5" height="1.5"/><rect x="9" y="6" width="1.5" height="1.5"/><rect x="2.5" y="9" width="1.5" height="1.5"/><rect x="5.8" y="9" width="1.5" height="1.5"/><rect x="9" y="9" width="1.5" height="1.5"/><rect x="2.5" y="12" width="1.5" height="1.5"/><rect x="5.8" y="12" width="1.5" height="1.5"/><rect x="9" y="12" width="1.5" height="1.5"/></g></svg>
<svg style="left:343px;top:777px" width="17" height="17"><g stroke="#ff1010" stroke-width="2"><line x1="8.5" y1="0" x2="8.5" y2="17"/><line x1="0" y1="8.5" x2="17" y2="8.5"/><line x1="2.5" y1="2.5" x2="14.5" y2="14.5"/><line x1="14.5" y1="2.5" x2="2.5" y2="14.5"/></g><circle cx="8.5" cy="8.5" r="5.3" fill="#ff4010"/><circle cx="8.5" cy="8.5" r="4.3" fill="#f8e020"/><path d="M6,9.5 C7,11.5 10,11.5 11,9.5" stroke="#a08000" stroke-width="0.8" fill="none"/><circle cx="7" cy="7" r="0.7" fill="#a08000"/><circle cx="10" cy="7" r="0.7" fill="#a08000"/></svg>
<div class="a" style="left:370px;top:777px;width:36px;height:23px;background:#3b4237;"></div>
<div class="a" style="left:370px;top:770px;width:36px;height:7px;background:#545454;"></div>
<div class="a" style="left:402px;top:770px;width:4px;height:30px;background:rgba(0,0,0,.18);"></div>
<div class="a" style="left:370px;top:798px;width:32px;height:2px;background:#88bff5;"></div>
<div class="a" style="left:403px;top:798px;width:3px;height:2px;background:#6a9bd0;"></div>
<svg style="left:381px;top:778px" width="15" height="15"><rect x="0.5" y="0.5" width="14" height="14" fill="#ffff00" stroke="#8a8a9a"/><rect x="13" y="1" width="1" height="13" fill="#c8c8e0"/><g fill="#ff0000"><rect x="7" y="2" width="1" height="1"/><rect x="4" y="6" width="1" height="3"/><rect x="10" y="6" width="1" height="3"/><rect x="2" y="12" width="1" height="1"/><rect x="3" y="11" width="1" height="1"/><rect x="12" y="12" width="1" height="1"/></g></svg>
<svg style="left:1062px;top:781px" width="13" height="8"><polyline points="0.8,7 6.5,1.2 12.2,7" fill="none" stroke="#fff" stroke-width="1.2"/></svg>
<svg style="left:1087px;top:780px" width="13" height="13"><g fill="none" stroke="#fff" stroke-width="1.1"><path d="M0.8,12 A11,11 0 0 1 11.8,1"/><path d="M3.3,12 A8.5,8.5 0 0 1 11.8,3.5"/><path d="M5.8,12 A6,6 0 0 1 11.8,6"/><path d="M8.3,12 A3.5,3.5 0 0 1 11.8,8.5"/></g><circle cx="11" cy="11" r="1.5" fill="#fff"/></svg>
<svg style="left:1108px;top:778px" width="17" height="14"><path d="M0.6,4.5 L3.5,4.5 L7.5,0.8 L7.5,13 L3.5,9.5 L0.6,9.5 Z" fill="none" stroke="#fff" stroke-width="1.1"/><path d="M9.5,4.5 C10.7,5.7 10.7,8.3 9.5,9.5 M11.5,2.8 C13.5,5 13.5,9 11.5,11.2" fill="none" stroke="#fff" stroke-width="1.1"/><path d="M13.8,1 C16.5,4 16.5,10 13.8,13" fill="none" stroke="#777" stroke-width="1"/></svg>
<svg style="left:1132px;top:779px" width="17" height="12"><path d="M2,0 L2,3 M5,0 L5,3 M0.8,3 L6.2,3 L6.2,5 C6.2,7 4.8,7.5 3.5,7.5 C2.2,7.5 0.8,7 0.8,5 Z M3.5,7.5 L3.5,10.5" fill="none" stroke="#fff" stroke-width="1.1"/><rect x="6.5" y="4" width="9" height="7" fill="none" stroke="#fff" stroke-width="1.1"/><rect x="8" y="5.5" width="6" height="4" fill="#fff"/><rect x="15.5" y="6" width="1.2" height="3" fill="#fff"/></svg>
<div class="t" style="left:1160px;top:778px;color:#fff;font-size:11px">POL</div>
<div class="t" style="left:1194px;top:778px;color:#fff;font-size:11px">21:14</div>
<svg style="left:1238px;top:777px" width="18" height="18"><path d="M0.6,0.6 L16.4,0.6 L16.4,12.4 L10.5,12.4 L8.5,15.5 L6.5,12.4 L0.6,12.4 Z" fill="none" stroke="#fff" stroke-width="1.1"/></svg>
<div class="a" style="left:1275px;top:770px;width:1px;height:30px;background:#5a5a5a;"></div>
</body></html>
